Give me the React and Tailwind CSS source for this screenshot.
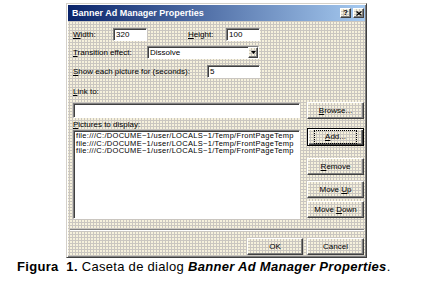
import React from "react";

const dither =
    "bg-[#cac6c0] bg-[radial-gradient(circle_at_1px_1px,#f6f1dc_0.8px,transparent_1px)] bg-[length:3px_3px]";
const raised =
    "border border-t-white border-l-white border-r-[#404040] border-b-[#404040] shadow-[inset_-1px_-1px_#808080]";
const sunken =
    "border border-t-[#808080] border-l-[#808080] border-r-white border-b-white shadow-[inset_1px_1px_#404040] bg-white";

const Button = ({ children, className = "" }) => (
    <div className={`${raised} ${dither} flex items-center justify-center text-[8px] leading-none ${className}`}>
        {children}
    </div>
);

const Field = ({ value, className = "" }) => (
    <div className={`${sunken} flex items-center pl-[2px] h-[13px] leading-none ${className}`}>{value}</div>
);

const pictures = [
    "file:///C:/DOCUME~1/user/LOCALS~1/Temp/FrontPageTemp",
    "file:///C:/DOCUME~1/user/LOCALS~1/Temp/FrontPageTemp",
    "file:///C:/DOCUME~1/user/LOCALS~1/Temp/FrontPageTemp",
];

export default function App() {
    return (
        <div className="w-[439px] h-[281px] bg-white overflow-hidden font-['Liberation_Sans',Arial,sans-serif] text-black">
            <div
                className={`ml-[66px] mt-[3px] w-[301px] h-[255px] p-[1px] flex flex-col border border-t-[#d4d0c8] border-l-[#d4d0c8] border-r-[#404040] border-b-[#404040] shadow-[inset_1px_1px_#fff,inset_-1px_-1px_#808080] ${dither}`}
            >
                {/* title bar */}
                <div className="h-[16px] flex items-center pl-[4px] pr-[1px] bg-[linear-gradient(to_right,#0a246a,#a6caf0)]">
                    <span className="text-white font-bold text-[9px] leading-none">Banner Ad Manager Properties</span>
                    <div className="ml-auto flex gap-[2px]">
                        <div className={`${raised} ${dither} w-[11px] h-[10px] flex items-center justify-center text-[8px] font-bold leading-none`}>
                            ?
                        </div>
                        <div className={`${raised} ${dither} w-[11px] h-[10px] flex items-center justify-center`}>
                            <svg width="6" height="5" viewBox="0 0 6 5">
                                <path d="M0.5 0.5 L5.5 4.5 M5.5 0.5 L0.5 4.5" stroke="#000" strokeWidth="1.3" />
                            </svg>
                        </div>
                    </div>
                </div>

                <div className="flex flex-col pl-[5px] pr-[1px] text-[8px] leading-none">
                    <div className="mt-[7px] h-[13px] flex items-center">
                        <span className="w-[40px]">
                            <u>W</u>idth:
                        </span>
                        <Field value="320" className="w-[34px]" />
                        <span className="w-[41px]" />
                        <span className="w-[38px]">
                            <u>H</u>eight:
                        </span>
                        <Field value="100" className="w-[34px]" />
                    </div>

                    <div className="mt-[5px] h-[13px] flex items-center">
                        <span className="w-[74px]">
                            <u>T</u>ransition effect:
                        </span>
                        <div className={`${sunken} w-[112px] h-[13px] flex items-center`}>
                            <span className="flex-1 pl-[2px]">Dissolve</span>
                            <div className={`${raised} ${dither} w-[10px] h-[11px] flex items-center justify-center`}>
                                <svg width="5" height="3" viewBox="0 0 5 3">
                                    <path d="M0 0 H5 L2.5 3 Z" fill="#000" />
                                </svg>
                            </div>
                        </div>
                    </div>

                    <div className="mt-[6px] h-[13px] flex items-center">
                        <span className="w-[134px]">
                            <u>S</u>how each picture for (seconds):
                        </span>
                        <Field value="5" className="w-[53px]" />
                    </div>

                    <div className="mt-[8px] h-[11px] flex items-center">
                        <span>
                            <u>L</u>ink to:
                        </span>
                    </div>

                    <div className="mt-[5px] h-[17px] flex items-center gap-[7px]">
                        <div className={`${sunken} w-[227px] h-[15px]`} />
                        <Button className="w-[57px] h-[17px]">
                            <span>
                                <u>B</u>rowse...
                            </span>
                        </Button>
                    </div>

                    <div className="flex gap-[7px]">
                        <div className="w-[227px] flex flex-col">
                            <div className="h-[11px] flex items-center">
                                <span>
                                    <u>P</u>ictures to display:
                                </span>
                            </div>
                            <div className={`${sunken} h-[89px] overflow-hidden pl-[2px] pt-[1px] text-[7.5px] leading-[7.5px] tracking-[0.3px] whitespace-nowrap`}>
                                {pictures.map((p, i) => (
                                    <div key={i}>{p}</div>
                                ))}
                            </div>
                        </div>
                        <div className="w-[57px] flex flex-col pt-[9px]">
                            <div className={`h-[18px] border border-black ${dither} shadow-[inset_1px_1px_#fff,inset_-1px_-1px_#404040,inset_-2px_-2px_#808080] flex items-center justify-center`}>
                                <span className="border border-dotted border-black px-[10px] py-[2px]">
                                    <u>A</u>dd...
                                </span>
                            </div>
                            <Button className="mt-[12px] h-[17px]">
                                <span>
                                    <u>R</u>emove
                                </span>
                            </Button>
                            <Button className="mt-[6px] h-[17px]">
                                <span>
                                    Move <u>U</u>p
                                </span>
                            </Button>
                            <Button className="mt-[3px] h-[17px]">
                                <span>
                                    Move <u>D</u>own
                                </span>
                            </Button>
                        </div>
                    </div>

                    <div className="mt-[10px] -ml-[3px] h-[2px] border-t border-t-[#808080] border-b border-b-white" />

                    <div className="mt-[7px] flex justify-end gap-[4px]">
                        <Button className="w-[56px] h-[17px]">OK</Button>
                        <Button className="w-[57px] h-[17px]">Cancel</Button>
                    </div>
                </div>
            </div>

            <p className="mt-[1px] pl-[17px] text-[13px] leading-[15px] tracking-[0.3px] whitespace-nowrap">
                <b>Figura&nbsp; 1.</b> Caseta de dialog{" "}
                <b>
                    <i>Banner Ad Manager Properties</i>
                </b>
                .
            </p>
        </div>
    );
}
